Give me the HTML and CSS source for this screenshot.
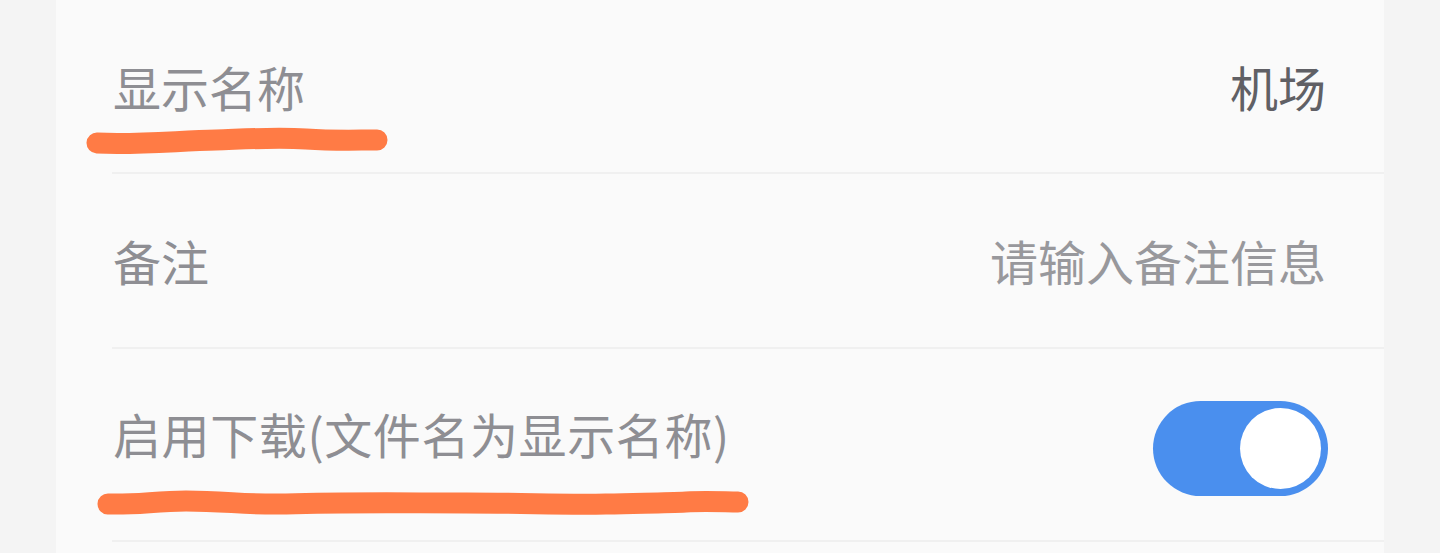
FILE: index.html
```html
<!DOCTYPE html>
<html lang="zh-CN">
<head>
  <meta charset="UTF-8" />
  <title>订阅设置</title>
  <link rel="stylesheet" href="styles.css">
</head>
<body>

  <div class="list">
    <div class="row row-name">
      <span class="label">显示名称</span>
      <span class="value">机场</span>
      <!-- hand-drawn marker over the label -->
      <svg class="mark mark-name" width="330" height="40" viewBox="0 0 330 40">
        <path d="M21 23 C60 25 100 21 140 20 C170 19 200 17 230 19 C260 21 280 20 301 20" />
      </svg>
    </div>

    <div class="row row-note">
      <span class="label">备注</span>
      <span class="placeholder">请输入备注信息</span>
    </div>

    <div class="row row-download">
      <span class="label label-up">启用下载(文件名为显示名称)</span>
      <div class="switch on"><div class="knob"></div></div>
      <svg class="mark mark-download" width="680" height="50" viewBox="0 0 680 50">
        <path d="M22 25 C50 26 70 22 100 22 C140 22 160 26 200 25 C260 23 320 24 380 24 C440 24 480 26 520 25 C560 24 580 24 600 23 C620 22 640 23 652 23" />
      </svg>
    </div>

    <div class="row row-more"></div>
  </div>

</body>
</html>
```

FILE: styles.css
```css
body {
  margin: 0;
  background-color: #f4f4f4;
  font-family: "Noto Sans CJK SC", "Noto Sans", sans-serif;
  overflow: hidden;
}

.list {
  margin: 0 56px;
  background-color: #fafafa;
}

.row {
  position: relative;
  display: flex;
  justify-content: space-between;
  align-items: center;
  padding: 0 58px 0 57px;
  font-size: 48px;
  line-height: 1;
}
/* divider starts under the text, runs to the card edge */
.row::after {
  content: "";
  position: absolute;
  left: 56px;
  right: 0;
  bottom: 0;
  height: 2px;
  background-color: #f0f0f0;
}

.row-name { height: 174px; }
.row-note { height: 175px; }
.row-download {
  height: 193px;
  padding-right: 56px;
}
.row-more { height: 11px; }
.row-more::after { display: none; }

.label {
  color: #8e8e93;
  margin-bottom: 3px;
}
.label-up {
  margin-bottom: 26px;
  letter-spacing: 0.6px;
}
.value {
  color: #606065;
  margin-bottom: 3px;
}
.placeholder {
  color: #98989c;
  margin-bottom: 3px;
}

/* toggle */
.switch {
  position: relative;
  width: 175px;
  height: 95px;
  border-radius: 48px;
  background-color: #d6d6d6;
  margin-top: 6px;
}
.switch.on {
  background-color: #4a8fee;
}
.knob {
  position: absolute;
  top: 7px;
  right: 7px;
  width: 81px;
  height: 81px;
  border-radius: 50%;
  background-color: #ffffff;
}

/* orange marker strokes */
.mark {
  position: absolute;
  overflow: visible;
}
.mark path {
  fill: none;
  stroke: #ff7b45;
  stroke-width: 21;
  stroke-linecap: round;
  stroke-linejoin: round;
}
.mark-name {
  left: 20px;
  top: 120px;
}
.mark-download {
  left: 30px;
  top: 130px;
}
```
